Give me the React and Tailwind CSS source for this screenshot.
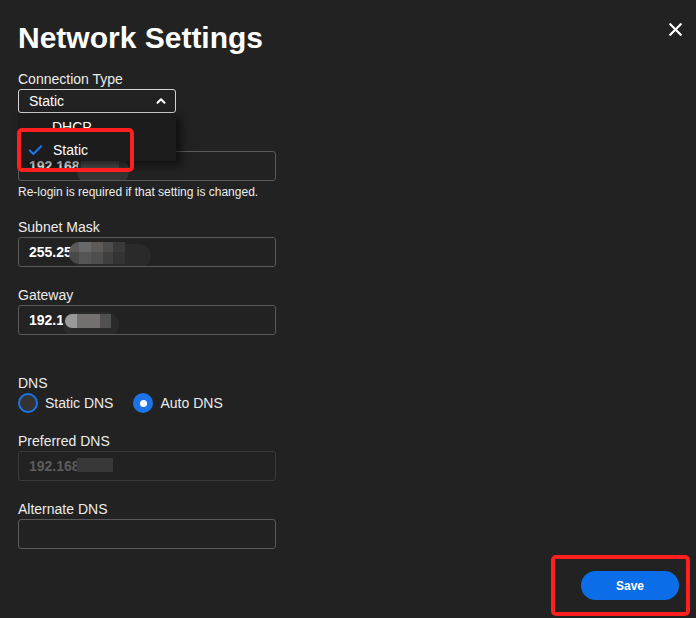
import { Check, ChevronUp, X } from "lucide-react";

function Label({ children, className = "" }) {
  return <div className={`text-[14px] leading-[19px] text-[#ececec] ${className}`}>{children}</div>;
}

function Field({ value, disabled = false, children }) {
  return (
    <div
      className={`relative flex h-[30px] w-[258px] items-center overflow-hidden rounded-[3px] border pl-[10px] text-[14px] font-bold ${
        disabled ? "border-[#3b3b3b] text-[#5c5c5c]" : "border-[#5a5a5a] text-white"
      }`}
    >
      {value}
      {children}
    </div>
  );
}

function Radio({ checked, label }) {
  return (
    <label className="flex items-center gap-[7px]">
      {checked ? (
        <span className="flex h-[20px] w-[20px] items-center justify-center rounded-full bg-[#1d74e8]">
          <span className="h-[7px] w-[7px] rounded-full bg-white" />
        </span>
      ) : (
        <span className="h-[20px] w-[20px] rounded-full border-2 border-[#1d74e8] bg-[#333]" />
      )}
      <span className="text-[14px] text-[#ececec]">{label}</span>
    </label>
  );
}

export default function App() {
  return (
    <div
      className="relative h-[618px] w-[696px] overflow-hidden bg-[#222222] pl-[18px] pt-[20px] text-white"
      style={{ fontFamily: '"Liberation Sans", Arial, sans-serif' }}
    >
      <button type="button" className="absolute right-[10px] top-[19px] text-white" aria-label="Close">
        <X size={21} strokeWidth={2.6} />
      </button>

      <h1 className="text-[30px] font-bold leading-[36px]">Network Settings</h1>

      <Label className="mt-[14px]">Connection Type</Label>
      <div className="relative z-10 w-[158px]">
        <div className="flex h-[24px] items-center justify-between rounded-[3px] border border-[#d4d4d4] pl-[10px] pr-[7px] text-[14px]">
          Static
          <ChevronUp size={14} strokeWidth={3.5} />
        </div>
        <div className="absolute left-0 top-full w-[158px] bg-[#1c1c1c] pt-[2px] text-[14px] shadow-[5px_4px_8px_rgba(0,0,0,0.55)]">
          <div className="flex h-[24px] items-center pl-[34px]">DHCP</div>
          <div className="flex h-[22px] items-center gap-[9px] pl-[9px]">
            <Check size={17} strokeWidth={3} className="text-[#1d74e8]" />
            Static
          </div>
        </div>
      </div>

      <Label className="mt-[19px]">IP Address</Label>
      <Field value="192.168">
        <div className="absolute left-[58px] top-[4px] h-[30px] w-[52px] rounded-full bg-[#343434]" />
        <div className="absolute left-[62px] top-[6px] h-[12px] w-[38px] bg-[#4a4a4a]" />
      </Field>
      <div className="mt-[3px] text-[12px] leading-[16px] text-[#ececec]">
        Re-login is required if that setting is changed.
      </div>

      <Label className="mt-[18px]">Subnet Mask</Label>
      <Field value="255.25">
        <div className="absolute left-[52px] top-[6px] h-[24px] w-[80px] rounded-full bg-[#2a2a2a]" />
        <div className="absolute left-[50px] top-[4px] grid grid-cols-[10px_12px_12px_10px_12px] grid-rows-[10px_12px]">
          <div className="rounded-tl-full bg-[#5a5a5a]" />
          <div className="bg-[#666968]" />
          <div className="bg-[#5e5a57]" />
          <div className="bg-[#4c4c4c]" />
          <div className="bg-[#3a3a3a]" />
          <div className="rounded-bl-full bg-[#4a4a4a]" />
          <div className="bg-[#555]" />
          <div className="bg-[#4e4e4e]" />
          <div className="bg-[#3f3f3f]" />
          <div className="bg-[#333]" />
        </div>
      </Field>

      <Label className="mt-[19px]">Gateway</Label>
      <Field value="192.1">
        <div className="absolute left-[44px] top-[6px] h-[26px] w-[56px] rounded-full bg-[#2a2a2a]" />
        <div className="absolute left-[46px] top-[8px] flex h-[14px]">
          <div className="w-[12px] rounded-l-full bg-[#9a9a9a]" />
          <div className="w-[23px] bg-[#757070]" />
          <div className="w-[11px] bg-[#505050]" />
        </div>
      </Field>

      <Label className="mt-[39px]">DNS</Label>
      <div className="flex h-[20px] items-center gap-[20px]">
        <Radio label="Static DNS" />
        <Radio checked label="Auto DNS" />
      </div>

      <Label className="mt-[19px]">Preferred DNS</Label>
      <Field value="192.168" disabled>
        <div className="absolute left-[58px] top-[6px] h-[14px] w-[36px] bg-[#383838]" />
      </Field>

      <Label className="mt-[19px]">Alternate DNS</Label>
      <Field value="" />

      <div className="mt-[22px] flex justify-end pr-[17px]">
        <button
          type="button"
          className="h-[29px] w-[98px] rounded-full bg-[#0b6ee8] text-[12px] font-bold text-white"
        >
          Save
        </button>
      </div>

      <div className="pointer-events-none absolute left-[17px] top-[128px] z-20 h-[44px] w-[117px] rounded-[5px] border-4 border-[#ff1f1f]" />
      <div className="pointer-events-none absolute left-[551px] top-[555px] z-20 h-[61px] w-[139px] rounded-[5px] border-4 border-[#ff1f1f]" />
    </div>
  );
}
